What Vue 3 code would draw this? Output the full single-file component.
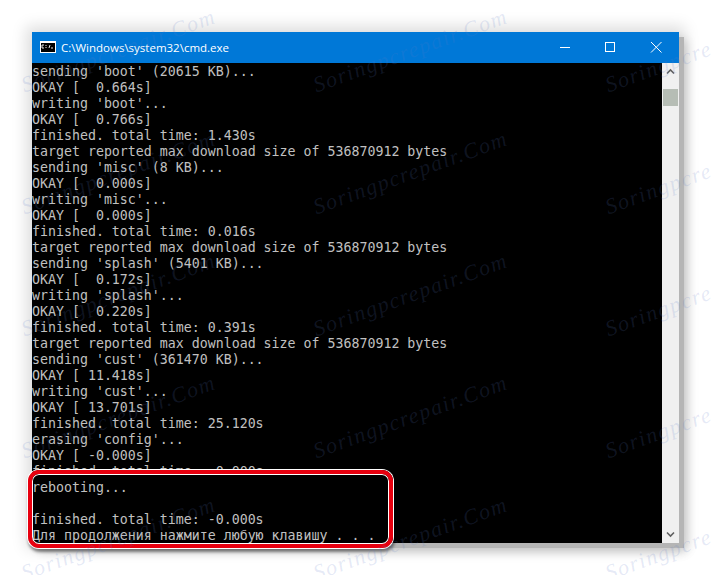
<script setup>
const lines = [
  "sending 'boot' (20615 KB)...",
  "OKAY [  0.664s]",
  "writing 'boot'...",
  "OKAY [  0.766s]",
  "finished. total time: 1.430s",
  "target reported max download size of 536870912 bytes",
  "sending 'misc' (8 KB)...",
  "OKAY [  0.000s]",
  "writing 'misc'...",
  "OKAY [  0.000s]",
  "finished. total time: 0.016s",
  "target reported max download size of 536870912 bytes",
  "sending 'splash' (5401 KB)...",
  "OKAY [  0.172s]",
  "writing 'splash'...",
  "OKAY [  0.220s]",
  "finished. total time: 0.391s",
  "target reported max download size of 536870912 bytes",
  "sending 'cust' (361470 KB)...",
  "OKAY [ 11.418s]",
  "writing 'cust'...",
  "OKAY [ 13.701s]",
  "finished. total time: 25.120s",
  "erasing 'config'...",
  "OKAY [ -0.000s]",
  "finished. total time: -0.000s",
  "rebooting...",
  "",
  "finished. total time: -0.000s",
  "Для продолжения нажмите любую клавишу . . ."
]
const marks = []
for (const x of [22, 314, 606]) {
  for (const y of [75, 197, 319, 441, 563]) {
    marks.push({ x, y })
  }
}
</script>

<template>
  <div class="page">
    <div class="window">
      <div class="titlebar">
        <svg class="appicon" width="16" height="16" viewBox="0 0 16 16">
          <rect x="0" y="2" width="16" height="12" fill="#fff" />
          <rect x="1" y="4" width="14" height="9" fill="#000" />
          <path d="M4 6H2v3h2M6 6v1M6 8v1M9 9l1-3M11 9h2" stroke="#e8e8e8" stroke-width="1" fill="none" />
        </svg>
        <span class="title">C:\Windows\system32\cmd.exe</span>
        <div class="controls">
          <svg width="46" height="31" viewBox="0 0 46 31"><path d="M19 15.500h10" stroke="#fff" fill="none" /></svg>
          <svg width="46" height="31" viewBox="0 0 46 31"><rect x="18.500" y="10.500" width="9" height="9" stroke="#fff" fill="none" /></svg>
          <svg width="46" height="31" viewBox="0 0 46 31"><path d="M18 10l10.500 10.500M28.500 10L18 20.500" stroke="#fff" fill="none" /></svg>
        </div>
      </div>
      <div class="body">
        <pre class="console"><div
          v-for="(line, i) in lines"
          :key="i"
          class="line"
          :class="{ cut: i === 25 }"
        >{{ line }}</div></pre>
        <div class="scrollbar">
          <svg class="arrow" width="17" height="17" viewBox="0 0 17 17"><path d="M5 10.500l3.500-3.500 3.500 3.500" stroke="#606060" stroke-width="1.600" fill="none" /></svg>
          <div class="thumb"></div>
          <div class="track"></div>
          <svg class="arrow" width="17" height="17" viewBox="0 0 17 17"><path d="M5 6.500l3.500 3.500 3.500-3.500" stroke="#606060" stroke-width="1.600" fill="none" /></svg>
        </div>
      </div>
    </div>
    <div class="highlight"></div>
    <span
      v-for="(m, i) in marks"
      :key="'m' + i"
      class="mark"
      :style="{ left: m.x + 'px', top: m.y + 'px' }"
    >Soringpcrepair.Com</span>
  </div>
</template>

<style scoped>
.page {
  position: relative;
  width: 711px;
  height: 575px;
  overflow: hidden;
  background: #fff;
  padding: 32px 0 0 32px;
  box-sizing: border-box;
}
.window {
  width: 647px;
  height: 511px;
  display: flex;
  flex-direction: column;
  box-shadow: 5px 5px 0 #b5b5b5, 0 0 14px 6px rgba(0, 0, 0, 0.13), 7px 8px 10px rgba(0, 0, 0, 0.2);
}
.titlebar {
  height: 31px;
  background: #0078d7;
  display: flex;
  align-items: center;
  color: #fff;
  flex: none;
}
.appicon {
  margin: -1px 0 0 8px;
  flex: none;
}
.title {
  margin-left: 5px;
  font: 11.5px/31px "Open Sans", "Liberation Sans", sans-serif;
  white-space: nowrap;
}
.controls {
  margin-left: auto;
  display: flex;
}
.body {
  flex: 1;
  display: flex;
  min-height: 0;
}
.console {
  flex: 1;
  margin: 0;
  padding-top: 1px;
  background: #000;
  color: #c0c0c0;
  font: 13.28px/16px "DejaVu Sans Mono", "Liberation Mono", monospace;
  overflow: hidden;
}
.line {
  height: 16px;
  white-space: pre;
}
.line.cut {
  overflow: hidden;
  height: 10px;
  margin-bottom: 6px;
}
.scrollbar {
  width: 17px;
  flex: none;
  background: #f0f0f0;
  display: flex;
  flex-direction: column;
}
.arrow {
  flex: none;
}
.thumb {
  height: 17px;
  margin: 9px 1px 0;
  background: #b6bdb5;
  flex: none;
}
.track {
  flex: 1;
}
.highlight {
  position: absolute;
  left: 28px;
  top: 470px;
  width: 365px;
  height: 78px;
  box-sizing: border-box;
  border: 4px solid #e8000f;
  border-radius: 11px;
  box-shadow: 0 0 0 1px #fff, inset 0 0 0 1px #fff, 1px 3px 3px 1px rgba(0, 0, 0, 0.45);
}
.mark {
  position: absolute;
  font: italic 400 22px/1 "Liberation Serif", serif;
  letter-spacing: 1.5px;
  color: rgba(95, 125, 200, 0.17);
  white-space: nowrap;
  transform: rotate(-20deg);
  transform-origin: left center;
  pointer-events: none;
}
</style>
